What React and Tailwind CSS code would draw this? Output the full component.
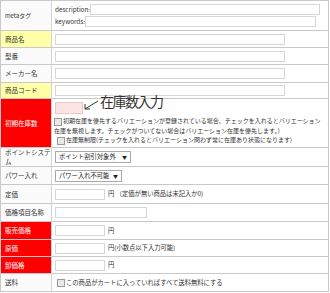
const font = { fontFamily: '"Noto Sans CJK JP", "Noto Sans", sans-serif' };

const Row = ({ label, tone = 'plain', h, children, labelClass = '' }) => {
    const toneClass =
        tone === 'yellow' ? 'bg-[#ffffa8] text-[#333]' :
            tone === 'red' ? 'bg-[#ff0000] text-white' :
                'bg-[#fbfbfb] text-[#333]';
    return (
        <div className={`flex border-b border-[#c9c9c9] ${h}`}>
            <div className={`w-[51px] shrink-0 border-r border-[#d4d4d4] flex items-center pl-[4px] leading-[9px] text-[6.5px] whitespace-nowrap ${toneClass} ${labelClass}`}>
                {label}
            </div>
            <div className="flex-1 flex items-center pl-[3px] bg-white">{children}</div>
        </div>
    );
};

const Box = ({ w, className = '' }) => (
    <div className={`h-[11px] border border-[#d6d6d6] bg-white ${w} ${className}`} />
);

const Check = ({ className = '' }) => (
    <span className={`inline-block w-[8px] h-[8px] border border-[#9a9a9a] bg-[#e8e8e8] align-middle mr-[1px] ${className}`} />
);

const Select = ({ text, w }) => (
    <div className={`h-[12px] border border-[#a9a9a9] bg-white flex items-center justify-between px-[3px] text-[6.3px] text-[#222] whitespace-nowrap ${w}`}>
        <span>{text}</span>
        <span className="text-[5px]">▼</span>
    </div>
);

const Note = ({ children }) => (
    <span className="ml-[3px] text-[6.3px] text-[#333] whitespace-nowrap">{children}</span>
);

export default function App() {
    return (
        <div className="relative w-[330px] h-[293px] overflow-hidden bg-white" style={font}>
            <div className="w-[329px] border-l border-r border-t border-[#c9c9c9]">
                <Row label="metaタグ" h="h-[30px]" labelClass="text-[6px]">
                    <div className="flex flex-col gap-[1px] text-[6.3px] text-[#333] w-full">
                        <div className="flex items-center">
                            <span>description:</span>
                            <Box w="w-[230px]" />
                        </div>
                        <div className="flex items-center">
                            <span>keywords:</span>
                            <Box w="w-[231px]" />
                        </div>
                    </div>
                </Row>
                <Row label="商品名" tone="yellow" h="h-[17px]"><Box w="w-[230px]" /></Row>
                <Row label="型番" h="h-[17px]"><Box w="w-[230px]" /></Row>
                <Row label="メーカー名" h="h-[18px]"><Box w="w-[230px]" /></Row>
                <Row label="商品コード" tone="yellow" h="h-[16px]"><Box w="w-[230px]" /></Row>
                <Row label="初期在庫数" tone="red" h="h-[49px]">
                    <div className="flex flex-col items-start w-full pt-[1px] text-[6px] leading-[9.5px] text-[#333] whitespace-nowrap">
                        <div className="h-[12px] w-[28px] border border-[#f0c4c4] bg-[#fde4e4] mb-[2px]" />
                        <div className="-ml-[1px]">
                            <Check />初期在庫を優先するバリエーションが登録されている場合、チェックを入れるとバリエーション
                            <br />在庫を無視します。チェックがついてない場合はバリエーション在庫を優先します。）
                        </div>
                        <div className="ml-[2px]">
                            <Check />在庫無制限(チェックを入れるとバリエーション問わず常に在庫あり状態になります)
                        </div>
                    </div>
                </Row>
                <Row label={<span>ポイントシステ<br />ム</span>} h="h-[19px]">
                    <Select text="ポイント割引対象外" w="w-[76px]" />
                </Row>
                <Row label="パワー入れ" h="h-[18px]">
                    <Select text="パワー入れ不可能" w="w-[67px]" />
                </Row>
                <Row label="定価" h="h-[19px]">
                    <Box w="w-[50px]" />
                    <Note>円 （定価が無い商品は未記入か0)</Note>
                </Row>
                <Row label="価格項目名称" h="h-[18px]"><Box w="w-[92px]" /></Row>
                <Row label="販売価格" tone="red" h="h-[18px]">
                    <Box w="w-[50px]" /><Note>円</Note>
                </Row>
                <Row label="原価" tone="red" h="h-[17px]">
                    <Box w="w-[50px]" /><Note>円(小数点以下入力可能)</Note>
                </Row>
                <Row label="卸価格" tone="red" h="h-[17px]">
                    <Box w="w-[50px]" /><Note>円</Note>
                </Row>
                <Row label="送料" h="h-[18px]">
                    <span className="text-[6.3px] text-[#333] whitespace-nowrap ml-[2px]">
                        <Check />この商品がカートに入っていればすべて送料無料にする
                    </span>
                </Row>
            </div>

            {/* annotation */}
            <svg className="absolute left-[83px] top-[99px]" width="16" height="13" viewBox="0 0 16 13">
                <path d="M15 2 L2 10" stroke="#333" strokeWidth="1" fill="none" />
                <path d="M2 5 L2 10 L7 10" stroke="#333" strokeWidth="1" fill="none" />
            </svg>
            <div className="absolute left-[100px] top-[93px] text-[14px] leading-[17px] tracking-[-1.5px] text-[#333]">在庫数入力</div>
        </div>
    );
}
